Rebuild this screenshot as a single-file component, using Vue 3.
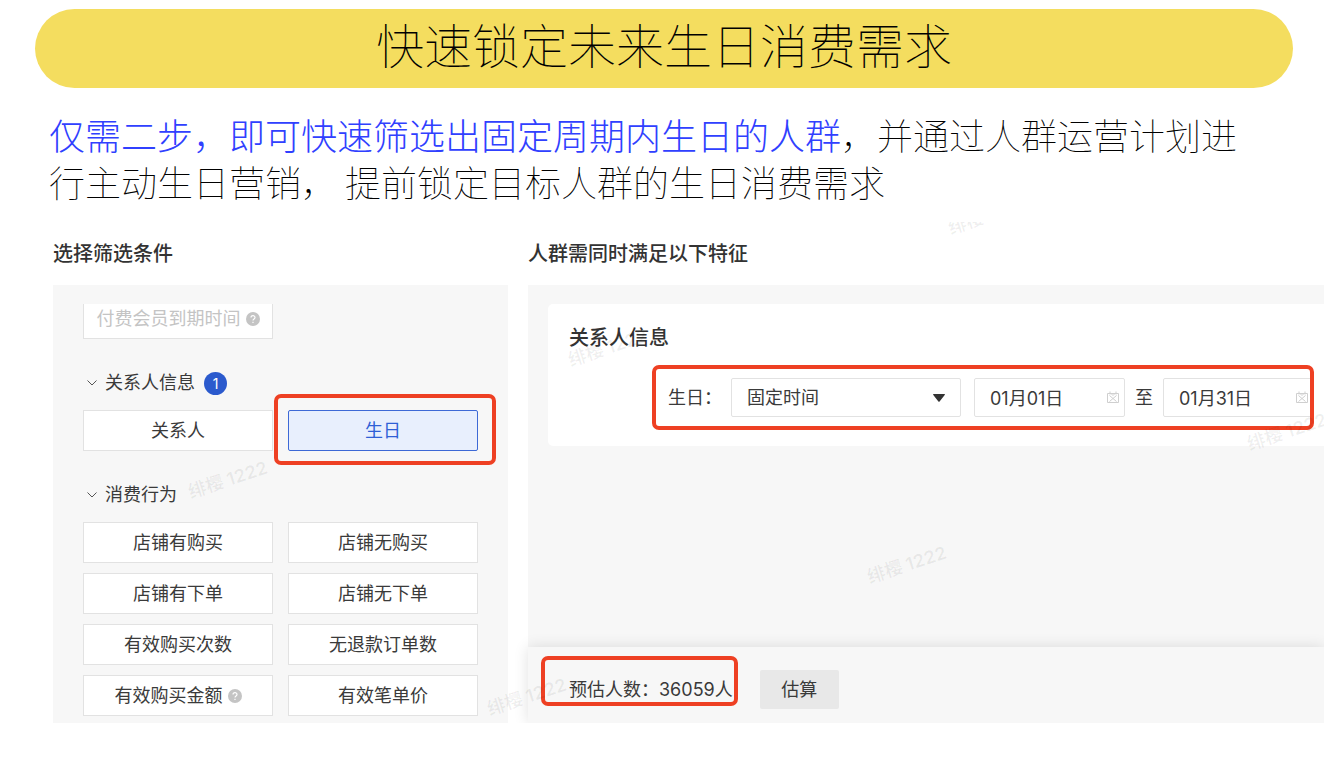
<script setup>
import { ref } from 'vue'

const relation = [
  { label: '关系人' },
  { label: '生日', active: true },
]
const behaviour = [
  { label: '店铺有购买' },
  { label: '店铺无购买' },
  { label: '店铺有下单' },
  { label: '店铺无下单' },
  { label: '有效购买次数' },
  { label: '无退款订单数' },
  { label: '有效购买金额', help: true },
  { label: '有效笔单价' },
]
const mode = ref('固定时间')
const start = ref('01月01日')
const end = ref('01月31日')
</script>

<template>
  <main class="page">
    <h1 class="banner">快速锁定未来生日消费需求</h1>
    <p class="intro"><strong>仅需二步，即可快速筛选出固定周期内生日的人群</strong>，并通过人群运营计划进行主动生日营销， 提前锁定目标人群的生日消费需求</p>

    <div class="board">
      <section class="column">
        <h2 class="title">选择筛选条件</h2>
        <div class="panel filters">
          <div class="scroll">
            <div class="grid first">
              <button type="button" class="tag muted">
                付费会员到期时间
                <svg class="help" viewBox="0 0 14 14" aria-hidden="true"><circle cx="7" cy="7" r="7" /><path d="M5 5.6C5 3.1 9 3.1 9 5.5 9 7 7 6.9 7 8.5M7 9.8v1.2" /></svg>
              </button>
            </div>
            <h3 class="group">
              <svg class="chevron" viewBox="0 0 10 6" aria-hidden="true"><path d="M0.5 0.5 5 5 9.5 0.5" /></svg>
              关系人信息<span class="badge">1</span>
            </h3>
            <div class="grid">
              <button v-for="item in relation" :key="item.label" type="button" class="tag" :class="{ active: item.active }">{{ item.label }}</button>
            </div>
            <h3 class="group">
              <svg class="chevron" viewBox="0 0 10 6" aria-hidden="true"><path d="M0.5 0.5 5 5 9.5 0.5" /></svg>
              消费行为
            </h3>
            <div class="grid">
              <button v-for="item in behaviour" :key="item.label" type="button" class="tag">
                {{ item.label }}
                <svg v-if="item.help" class="help" viewBox="0 0 14 14" aria-hidden="true"><circle cx="7" cy="7" r="7" /><path d="M5 5.6C5 3.1 9 3.1 9 5.5 9 7 7 6.9 7 8.5M7 9.8v1.2" /></svg>
              </button>
            </div>
          </div>
        </div>
      </section>

      <section class="column">
        <h2 class="title">人群需同时满足以下特征</h2>
        <div class="panel result">
          <div class="card">
            <h3 class="card-title">关系人信息</h3>
            <div class="row">
              <label class="label" for="mode">生日：</label>
              <div class="field select">
                <select id="mode" v-model="mode"><option>固定时间</option></select>
                <svg class="arrow" viewBox="0 0 12 8" aria-hidden="true"><path d="M0.5 0h11q.8.2.2.9L6.6 7.4q-.6.7-1.2 0L.3.9Q-.2.2.5 0Z" /></svg>
              </div>
              <div class="field date">
                <input v-model="start" type="text" aria-label="开始日期" />
                <svg class="calendar" viewBox="0 0 12 12" aria-hidden="true"><path d="M.5 2.5h11v9H.5zM3 .5v3M9 .5v3M2.5 4.5l7 6M9.5 4.5l-7 6M4 2.5l2 2 2-2" /></svg>
              </div>
              <span class="to">至</span>
              <div class="field date">
                <input v-model="end" type="text" aria-label="结束日期" />
                <svg class="calendar" viewBox="0 0 12 12" aria-hidden="true"><path d="M.5 2.5h11v9H.5zM3 .5v3M9 .5v3M2.5 4.5l7 6M9.5 4.5l-7 6M4 2.5l2 2 2-2" /></svg>
              </div>
            </div>
          </div>
          <footer class="footer">
            <span class="estimate">预估人数：36059人</span>
            <button type="button" class="calc">估算</button>
          </footer>
        </div>
      </section>

      <div class="marks" aria-hidden="true">
        <span class="mark m1">绯樱 1222</span>
        <span class="mark m2">绯樱 1222</span>
        <span class="mark m3">绯樱 1222</span>
        <span class="mark m4">绯樱 1222</span>
        <span class="mark m5">绯樱 1222</span>
        <span class="mark m6">绯樱 1222</span>
      </div>
    </div>
  </main>
</template>

<style>
body {
  background: #fff;
}
</style>

<style scoped>
* {
  box-sizing: border-box;
}
.page {
  padding: 9px 15px 0 35px;
  color: #3a3a3a;
  font: 18px/28px Inter, "Noto Sans CJK SC", sans-serif;
}
h1, h2, h3, p {
  margin: 0;
}
button, input, select {
  font: inherit;
  color: inherit;
}
.banner {
  margin-right: 31px;
  height: 79px;
  border-radius: 40px;
  background: #f4dd5f;
  color: #000;
  text-align: center;
  font: 100 48px/69px "Noto Sans CJK SC", sans-serif;
}
.intro {
  margin: 23px 65px 17px 14px;
  color: #000;
  font: 100 36px/47px "Noto Sans CJK SC", sans-serif;
}
.intro strong {
  font-weight: 300;
  color: #3040ff;
}
.board {
  position: relative;
  display: grid;
  grid-template-columns: 455px minmax(0, 1fr);
  gap: 20px;
  padding-left: 18px;
  overflow: hidden;
}
.column {
  display: flex;
  flex-direction: column;
}
.title {
  padding: 18px 0 17px;
  font-size: 20px;
  line-height: 28px;
  font-weight: 500;
  color: #333;
}
.panel {
  flex: 1;
  background: #f7f7f7;
}
.filters {
  padding: 19px 30px 7px;
}
.scroll {
  margin: 0 -20px;
  padding: 0 20px;
  overflow: hidden;
}
.grid {
  display: grid;
  grid-template-columns: 1fr 1fr;
  gap: 10px 15px;
}
.first {
  margin-top: -6px;
}
.group {
  display: flex;
  align-items: center;
  height: 24px;
  margin: 32px 0 15px;
  padding-left: 4px;
  font-size: 18px;
  font-weight: 400;
}
.chevron {
  width: 10px;
  height: 6px;
  margin-right: 8px;
  fill: none;
  stroke: #555;
}
.badge {
  width: 23px;
  height: 23px;
  margin-left: 9px;
  border-radius: 50%;
  background: #2b5acd;
  color: #fff;
  font-size: 14px;
  line-height: 23px;
  text-align: center;
}
.tag {
  position: relative;
  display: flex;
  align-items: center;
  justify-content: center;
  gap: 5px;
  height: 41px;
  padding: 0;
  border: 1px solid #e2e2e2;
  background: #fff;
}
.muted {
  color: #c4c4c4;
}
.active {
  border-color: #3d69d6;
  border-radius: 2px;
  background: #e8effd;
  color: #2f5fd6;
}
.help {
  width: 14px;
  height: 14px;
  fill: #c4c4c4;
}
.help path {
  fill: none;
  stroke: #fff;
  stroke-width: 1.2;
}
.active::after, .row::after, .estimate::after {
  content: "";
  position: absolute;
  border: 4px solid #ee4023;
  border-radius: 7px;
  pointer-events: none;
}
.active::after {
  inset: -17px -19px -15px -15px;
}
.result {
  display: flex;
  flex-direction: column;
}
.card {
  margin: 19px 0 0 20px;
  padding: 20px 10px 29px 0;
  border-radius: 5px 0 0 5px;
  background: #fff;
}
.card-title {
  padding-left: 21px;
  font-size: 20px;
  line-height: 28px;
  font-weight: 500;
  color: #333;
}
.row {
  position: relative;
  display: flex;
  align-items: center;
  margin: 26px 0 0 104px;
  padding-left: 16px;
}
.row::after {
  inset: -13px 0;
}
.label {
  width: 63px;
}
.field {
  position: relative;
  height: 39px;
}
.field select, .field input {
  appearance: none;
  width: 100%;
  height: 100%;
  padding: 0 0 0 15px;
  border: 1px solid #e2e2e2;
  border-radius: 2px;
  background: #fff;
  outline: none;
}
.field input {
  padding-bottom: 2px;
}
.select {
  flex: 230 1 0;
  margin-right: 13px;
}
.date {
  flex: 151 1 0;
}
.arrow {
  position: absolute;
  top: 16px;
  right: 16px;
  width: 12px;
  height: 8px;
  fill: #333;
  pointer-events: none;
}
.calendar {
  position: absolute;
  top: 13px;
  right: 6px;
  width: 12px;
  height: 12px;
  fill: none;
  stroke: #cfcfcf;
}
.to {
  width: 38px;
  text-align: center;
}
.footer {
  display: flex;
  align-items: center;
  margin-top: auto;
  padding: 23px 0 14px 41px;
  background: #f7f7f7;
  box-shadow: 0 0 14px rgba(0, 0, 0, 0.12);
}
.estimate {
  position: relative;
}
.estimate::after {
  inset: -20px -5px -2px -28px;
}
.calc {
  width: 79px;
  height: 39px;
  margin-left: 27px;
  padding: 0;
  border: 0;
  border-radius: 2px;
  background: #e8e8e8;
}
.marks {
  position: absolute;
  inset: 0;
  pointer-events: none;
}
.mark {
  position: absolute;
  width: 90px;
  color: rgba(0, 0, 0, 0.06);
  font-weight: 700;
  text-align: center;
  transform: rotate(-18deg);
}
.m1 { left: 148px; top: 244px; }
.m2 { left: 528px; top: 112px; }
.m3 { left: 908px; top: -20px; }
.m4 { left: 827px; top: 329px; }
.m5 { left: 447px; top: 461px; }
.m6 { left: 1207px; top: 196px; }
</style>
